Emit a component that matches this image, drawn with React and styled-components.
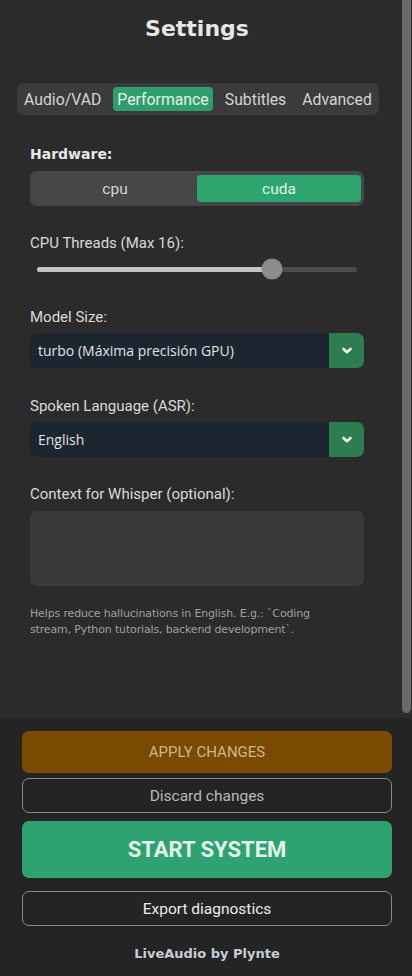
import React from 'react';
import styled, { createGlobalStyle } from 'styled-components';

const GlobalStyle = createGlobalStyle`
    body {
        margin: 0;
        background: #242424;
        font-family: Roboto, "Liberation Sans", sans-serif;
    }
`;

const tabs = ['Audio/VAD', 'Performance', 'Subtitles', 'Advanced'];

const Chevron = () => (
    <svg width="12" height="8" viewBox="0 0 12 8">
        <polyline points="2.5,2 6,5.2 9.5,2" fill="none" stroke="#eef3ef" strokeWidth="2.6" strokeLinecap="round" strokeLinejoin="round" />
    </svg>
);

const Combo = ({ value }) => (
    <ComboBox>
        <ComboValue>{value}</ComboValue>
        <ComboButton><Chevron /></ComboButton>
    </ComboBox>
);

const App = () => {
    const threads = 12;
    const pct = ((threads - 1) / 15) * 100;

    return (
        <>
            <GlobalStyle />
            <Page>
                <Panel>
                    <Content>
                        <Title>Settings</Title>
                        <TabBar>
                            {tabs.map((t) => (
                                <Tab key={t} active={t === 'Performance'}>{t}</Tab>
                            ))}
                        </TabBar>

                        <Fields>
                            <BoldLabel>Hardware:</BoldLabel>
                            <Segment>
                                <SegOption>cpu</SegOption>
                                <SegOption active>cuda</SegOption>
                            </Segment>

                            <Label space={28}>CPU Threads (Max 16):</Label>
                            <Slider>
                                <Track>
                                    <Fill style={{ width: pct + '%' }} />
                                    <Knob style={{ left: pct + '%' }} />
                                </Track>
                            </Slider>

                            <Label space={28}>Model Size:</Label>
                            <Combo value="turbo (Máxima precisión GPU)" />

                            <Label space={29}>Spoken Language (ASR):</Label>
                            <Combo value="English" />

                            <Label space={28}>Context for Whisper (optional):</Label>
                            <TextBox />

                            <Help>
                                Helps reduce hallucinations in English. E.g.: `Coding<br />
                                stream, Python tutorials, backend development`.
                            </Help>
                        </Fields>
                    </Content>
                    <Scrollbar />
                </Panel>

                <Footer>
                    <ApplyButton>APPLY CHANGES</ApplyButton>
                    <OutlineButton space={5} color="#b9b9b9">Discard changes</OutlineButton>
                    <StartButton>START SYSTEM</StartButton>
                    <OutlineButton space={13} color="#ececec">Export diagnostics</OutlineButton>
                    <Brand>LiveAudio by Plynte</Brand>
                </Footer>
            </Page>
        </>
    );
};

const Page = styled.div`
    height: 976px;
    display: flex;
    flex-direction: column;
    background: #242424;
`;

const Panel = styled.div`
    height: 718px;
    display: flex;
    background: #2b2b2b;
`;

const Content = styled.div`
    flex: 1;
    display: flex;
    flex-direction: column;
`;

const Scrollbar = styled.div`
    width: 9px;
    height: 713px;
    margin-right: 1px;
    background: #6a6a6a;
    border-radius: 0 0 5px 5px;
`;

const Title = styled.h1`
    margin: 16px 8px 0 0;
    font-family: "DejaVu Sans", sans-serif;
    font-weight: 700;
    font-size: 22px;
    line-height: 26px;
    text-align: center;
    color: #e6e6e6;
`;

const TabBar = styled.div`
    align-self: flex-start;
    margin: 41px 0 0 17px;
    padding: 4px 3px;
    height: 24px;
    display: flex;
    gap: 8px;
    background: #3b3b3b;
    border-radius: 7px;
`;

const Tab = styled.div`
    padding: 0 4px;
    display: flex;
    align-items: center;
    font-size: 15.8px;
    color: ${(p) => (p.active ? '#e2f3ea' : '#d4d4d4')};
    background: ${(p) => (p.active ? '#2e9e6c' : 'transparent')};
    border-radius: 4px;
`;

const Fields = styled.div`
    display: flex;
    flex-direction: column;
    padding: 0 38px 0 30px;
`;

const BoldLabel = styled.div`
    margin-top: 31px;
    font-family: "DejaVu Sans", sans-serif;
    font-weight: 700;
    font-size: 14px;
    line-height: 17px;
    color: #e8e8e8;
`;

const Label = styled.div`
    margin-top: ${(p) => p.space}px;
    font-size: 15px;
    line-height: 18px;
    color: #dadada;
`;

const Segment = styled.div`
    margin-top: 8px;
    height: 35px;
    box-sizing: border-box;
    padding: 4px 3px;
    display: flex;
    background: #474747;
    border-radius: 7px;
`;

const SegOption = styled.div`
    flex: 1;
    display: flex;
    align-items: center;
    justify-content: center;
    font-size: 15.5px;
    color: ${(p) => (p.active ? '#e2f3ea' : '#d6d6d6')};
    background: ${(p) => (p.active ? '#2ea56f' : 'transparent')};
    border-radius: 4px;
`;

const Slider = styled.div`
    margin-top: 6px;
    height: 22px;
    padding: 0 7px;
    display: flex;
    align-items: center;
`;

const Track = styled.div`
    position: relative;
    flex: 1;
    height: 5px;
    border-radius: 3px;
    background: #4a4e51;
`;

const Fill = styled.div`
    height: 100%;
    border-radius: 3px;
    background: #c4c4c4;
`;

const Knob = styled.div`
    position: absolute;
    top: 50%;
    width: 21px;
    height: 21px;
    border-radius: 50%;
    background: #8c8c8c;
    transform: translate(-50%, -50%);
`;

const ComboBox = styled.div`
    margin-top: 7px;
    height: 35px;
    display: flex;
    background: #1c2630;
    border-radius: 7px;
    overflow: hidden;
`;

const ComboValue = styled.div`
    flex: 1;
    display: flex;
    align-items: center;
    padding-left: 8px;
    font-family: "Open Sans", sans-serif;
    font-size: 14px;
    color: #e2e2e2;
`;

const ComboButton = styled.div`
    width: 35px;
    display: flex;
    align-items: center;
    justify-content: center;
    background: #2e7d50;
`;

const TextBox = styled.div`
    margin-top: 8px;
    height: 75px;
    background: #3a3a3a;
    border-radius: 7px;
`;

const Help = styled.p`
    margin: 20px 0 0;
    font-family: "DejaVu Sans", sans-serif;
    font-size: 11px;
    line-height: 16px;
    letter-spacing: -0.15px;
    color: #a0a0a0;
`;

const Footer = styled.div`
    flex: 1;
    display: flex;
    flex-direction: column;
    padding: 13px 20px 0 22px;
`;

const ApplyButton = styled.div`
    height: 42px;
    display: flex;
    align-items: center;
    justify-content: center;
    background: #7a4a00;
    border-radius: 7px;
    font-size: 15px;
    color: #cbb694;
`;

const OutlineButton = styled.div`
    margin-top: ${(p) => p.space}px;
    height: 35px;
    box-sizing: border-box;
    display: flex;
    align-items: center;
    justify-content: center;
    border: 1.5px solid #8a8a8a;
    border-radius: 7px;
    font-size: 15.5px;
    color: ${(p) => p.color};
`;

const StartButton = styled.div`
    margin-top: 8px;
    height: 57px;
    display: flex;
    align-items: center;
    justify-content: center;
    background: #2ea371;
    border-radius: 7px;
    font-size: 22px;
    font-weight: 700;
    color: #e4f2eb;
`;

const Brand = styled.div`
    margin-top: 20px;
    text-align: center;
    font-family: "DejaVu Sans", sans-serif;
    font-weight: 700;
    font-size: 13px;
    line-height: 15px;
    color: #c8ccd4;
`;

export default App;
